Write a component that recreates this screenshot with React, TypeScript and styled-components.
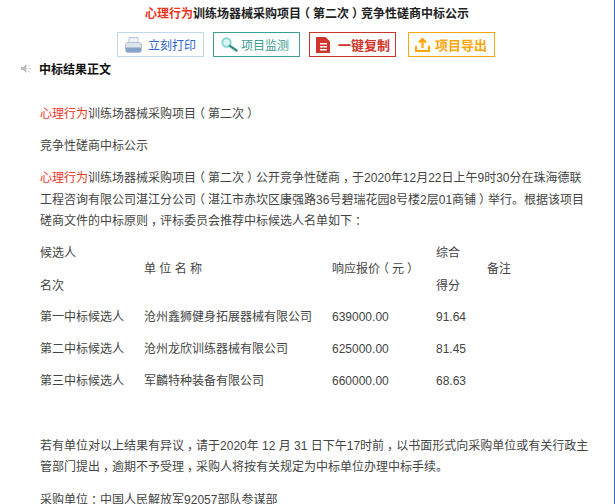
import React from "react";
import styled, { createGlobalStyle } from "styled-components";

const Global = createGlobalStyle`
  html, body { margin: 0; padding: 0; background: #fff; overflow: hidden; }
  body { font-family: "Liberation Sans", "Noto Sans CJK SC", sans-serif; }
`;

const Page = styled.div`
  width: 615px;
  height: 504px;
  box-sizing: border-box;
  border-right: 1px solid #2b6fb0;
  overflow: hidden;
`;

const Title = styled.h1`
  margin: 0;
  padding-top: 6px;
  height: 32px;
  box-sizing: border-box;
  font-size: 12px;
  line-height: 17px;
  font-weight: 700;
  color: #222;
  text-align: center;
`;

const Red = styled.span`
  color: #f0351f;
`;

const Punct = styled.span`
  font-feature-settings: "halt";
  padding: 0 3px;
`;

const Toolbar = styled.div`
  display: flex;
  height: 25px;
  padding-left: 117px;
`;

const Action = styled.div<{
  $color: string;
  $border: string;
  $bold?: boolean;
  $after: number;
  $pad: number;
  $inner: number;
}>`
  display: flex;
  align-items: center;
  box-sizing: border-box;
  width: 87px;
  height: 25px;
  margin-right: ${(p) => p.$after}px;
  padding-left: ${(p) => p.$pad}px;
  gap: ${(p) => p.$inner}px;
  border: 1px solid ${(p) => p.$border};
  color: ${(p) => p.$color};
  font-size: ${(p) => (p.$bold ? 13 : 12)}px;
  font-weight: ${(p) => (p.$bold ? 700 : 400)};
  white-space: nowrap;
`;

const SectionHead = styled.div`
  display: flex;
  align-items: center;
  height: 22px;
  padding-left: 21px;
  gap: 7px;
  font-size: 12px;
  font-weight: 700;
  color: #111;
`;

const Article = styled.div`
  padding: 25px 24px 0 40px;
  font-size: 12px;
  line-height: 21.6px;
  color: #444;
`;

const Para = styled.p<{ $tight?: boolean }>`
  margin: 0 0 ${(p) => (p.$tight ? 5.5 : 10.5)}px;
`;

const Table = styled.table`
  border-collapse: collapse;
  margin: 0 0 38px;
  table-layout: fixed;
  width: 500px;
`;

const Cell = styled.td<{ $w?: number; $head?: boolean }>`
  padding: ${(p) => (p.$head ? 4.2 : 5.2)}px 0;
  vertical-align: middle;
  width: ${(p) => (p.$w ? `${p.$w}px` : "auto")};
  font-size: 12px;
  line-height: 21.6px;
`;

const CellLine = styled.div`
  & + & {
    margin-top: 11.9px;
  }
`;

const PrintIcon = () => (
  <svg width="17" height="16" viewBox="0 0 17 16">
    <path d="M4 .5h9v6H4z" fill="#eef1f5" stroke="#b9c5d4" />
    <path d="M.5 8c0-1.500 1-2.500 2.500-2.500h11c1.500 0 2.500 1 2.500 2.500v5.500c0 1.200-1 2-2 2h-12c-1 0-2-.8-2-2z" fill="#dde4ec" stroke="#b4c1d2" />
    <path d="M1 10.500h15v3c0 1-.8 1.600-1.600 1.600H2.600C1.800 15.100 1 14.500 1 13.500z" fill="#86a2c4" />
  </svg>
);

const SearchIcon = () => (
  <svg width="17" height="15" viewBox="0 0 17 15">
    <circle cx="5.500" cy="5.500" r="4.200" fill="#dcf5f2" stroke="#86d8d0" strokeWidth="2" />
    <path d="M9 9l6.500 4.500" stroke="#3f9088" strokeWidth="2.600" strokeLinecap="round" />
  </svg>
);

const DocIcon = () => (
  <svg width="15" height="16" viewBox="0 0 15 16">
    <path fillRule="evenodd" d="M1 0h8.500L14 4.500V15c0 .6-.4 1-1 1H1c-.6 0-1-.4-1-1V1c0-.6.4-1 1-1zM4 6v1.500h7V6zm0 3v1.500h7V9zm0 3v1.500h7V12z" fill="#d0352c" />
  </svg>
);

const UploadIcon = () => (
  <svg width="15" height="15" viewBox="0 0 15 15" fill="none">
    <path d="M1 9v5h13V9" stroke="#fca60b" strokeWidth="2" />
    <path d="M7.500 11V2.500M4 5.500L7.500 2 11 5.500" stroke="#fca60b" strokeWidth="2.200" />
  </svg>
);

const SpeakerIcon = () => (
  <svg width="11" height="11" viewBox="0 0 11 11">
    <path d="M0 4h2l3.500-3v9L2 7H0z" fill="#bdbdbd" />
    <path d="M7 3.500L9 1.500M7.500 5.500H10M7 7.500l2 2" stroke="#c8c8c8" fill="none" />
  </svg>
);

/* Full-width punctuation in the reference sits centred in its em box. */
const Txt = ({ children }: { children: string }) => (
  <>
    {children.split(/([（），：])/).map((part, i) =>
      i % 2 ? <Punct key={i}>{part}</Punct> : part
    )}
  </>
);

const rows = [
  ["第一中标候选人", "沧州鑫狮健身拓展器械有限公司", "639000.00", "91.64"],
  ["第二中标候选人", "沧州龙欣训练器械有限公司", "625000.00", "81.45"],
  ["第三中标候选人", "军麟特种装备有限公司", "660000.00", "68.63"],
];

export default function App() {
  return (
    <Page>
      <Global />
      <Title>
        <Red>心理行为</Red><Txt>训练场器械采购项目（第二次）竞争性磋商中标公示</Txt>
      </Title>
      <Toolbar>
        <Action $color="#3366cc" $border="#bcd8ea" $after={9} $pad={7} $inner={6}><PrintIcon />立刻打印</Action>
        <Action $color="#3a9d8f" $border="#3b9e90" $after={9} $pad={7} $inner={3}><SearchIcon />项目监测</Action>
        <Action $color="#d0352c" $border="#c9352d" $after={12} $pad={6} $inner={7} $bold><DocIcon />一键复制</Action>
        <Action $color="#fca60b" $border="#fca60b" $after={0} $pad={6} $inner={5} $bold><UploadIcon />项目导出</Action>
      </Toolbar>
      <SectionHead><SpeakerIcon />中标结果正文</SectionHead>
      <Article>
        <Para><Red>心理行为</Red><Txt>训练场器械采购项目（第二次）</Txt></Para>
        <Para>竞争性磋商中标公示</Para>
        <Para $tight>
          <Red>心理行为</Red>
          <Txt>训练场器械采购项目（第二次）公开竞争性磋商，于2020年12月22日上午9时30分在珠海德联工程咨询有限公司湛江分公司（湛江市赤坎区康强路36号碧瑞花园8号楼2层01商铺）举行。根据该项目磋商文件的中标原则，评标委员会推荐中标候选人名单如下：</Txt>
        </Para>
        <Table>
          <tbody>
            <tr>
              <Cell $head $w={104}><CellLine>候选人</CellLine><CellLine>名次</CellLine></Cell>
              <Cell $head $w={188}><CellLine>单 位 名 称</CellLine></Cell>
              <Cell $head $w={104}><CellLine><Txt>响应报价（元）</Txt></CellLine></Cell>
              <Cell $head $w={51}><CellLine>综合</CellLine><CellLine>得分</CellLine></Cell>
              <Cell $head><CellLine>备注</CellLine></Cell>
            </tr>
            {rows.map((r) => (
              <tr key={r[0]}>
                {r.map((c) => (
                  <Cell key={c}><CellLine>{c}</CellLine></Cell>
                ))}
                <Cell />
              </tr>
            ))}
          </tbody>
        </Table>
        <Para><Txt>若有单位对以上结果有异议，请于2020年 12 月 31 日下午17时前，以书面形式向采购单位或有关行政主管部门提出，逾期不予受理，采购人将按有关规定为中标单位办理中标手续。</Txt></Para>
        <Para><Txt>采购单位：中国人民解放军92057部队参谋部</Txt></Para>
      </Article>
    </Page>
  );
}
